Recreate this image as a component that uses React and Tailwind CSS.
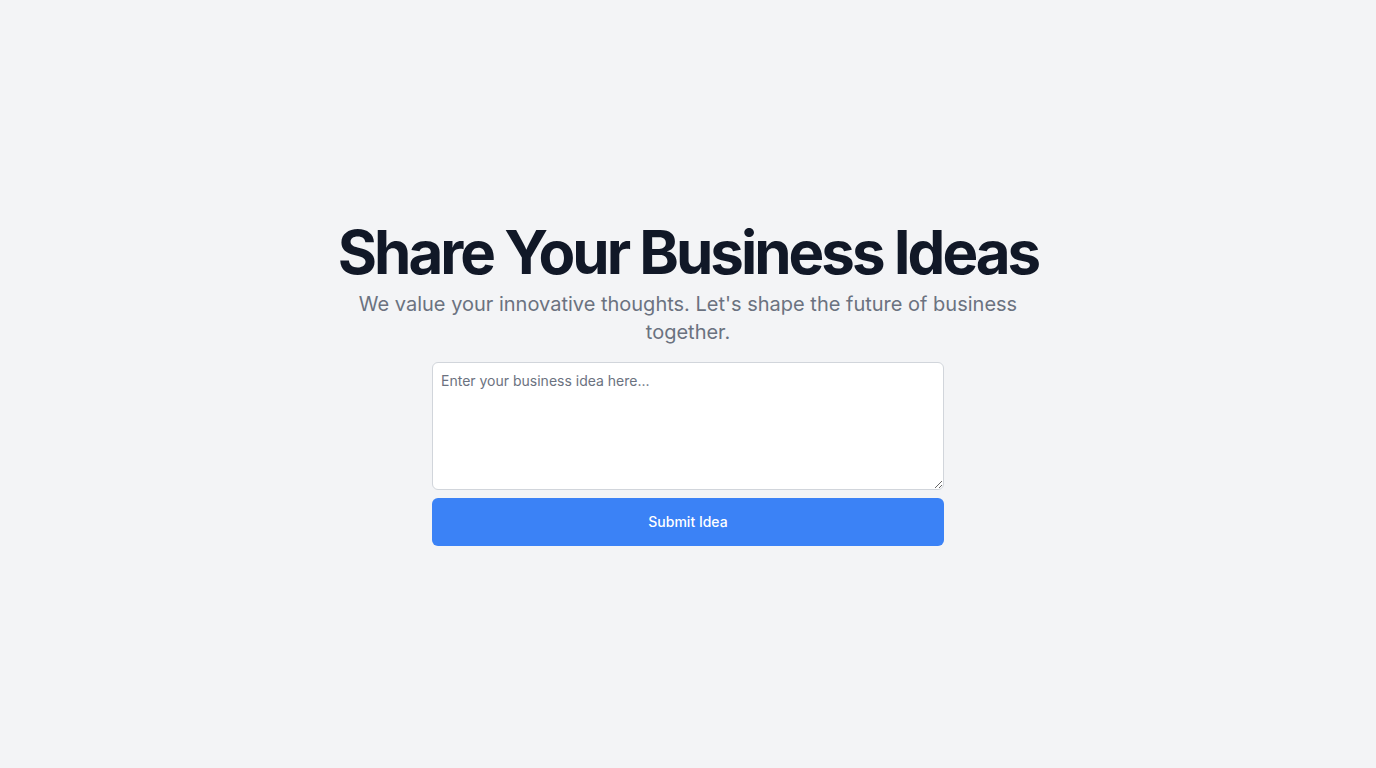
import React from 'react';

// 비즈니스 아이디어 제출 페이지
const App = () => {
  return (
    <div
      className="min-h-screen flex items-center justify-center bg-[#f3f4f6]"
      style={{ fontFamily: 'Inter, "Noto Sans", sans-serif' }}
    >
      <div className="flex flex-col items-center text-center">
        <h1 className="text-6xl font-bold tracking-tighter text-[#111827] mb-2">
          Share Your Business Ideas
        </h1>
        <p className="text-xl text-[#6b7280] max-w-2xl mb-4">
          We value your innovative thoughts. Let's shape the future of business together.
        </p>
        <form className="w-[512px] flex flex-col gap-2" onSubmit={(e) => e.preventDefault()}>
          <textarea
            className="w-full h-32 p-2 text-sm bg-white border border-[#d1d5db] rounded-md text-[#111827] placeholder:text-[#6b7280] focus:outline-none"
            placeholder="Enter your business idea here..."
          />
          <button
            type="submit"
            className="w-full h-12 bg-[#3b82f6] text-white text-sm font-medium rounded-md"
          >
            Submit Idea
          </button>
        </form>
      </div>
    </div>
  );
};

export default App;
